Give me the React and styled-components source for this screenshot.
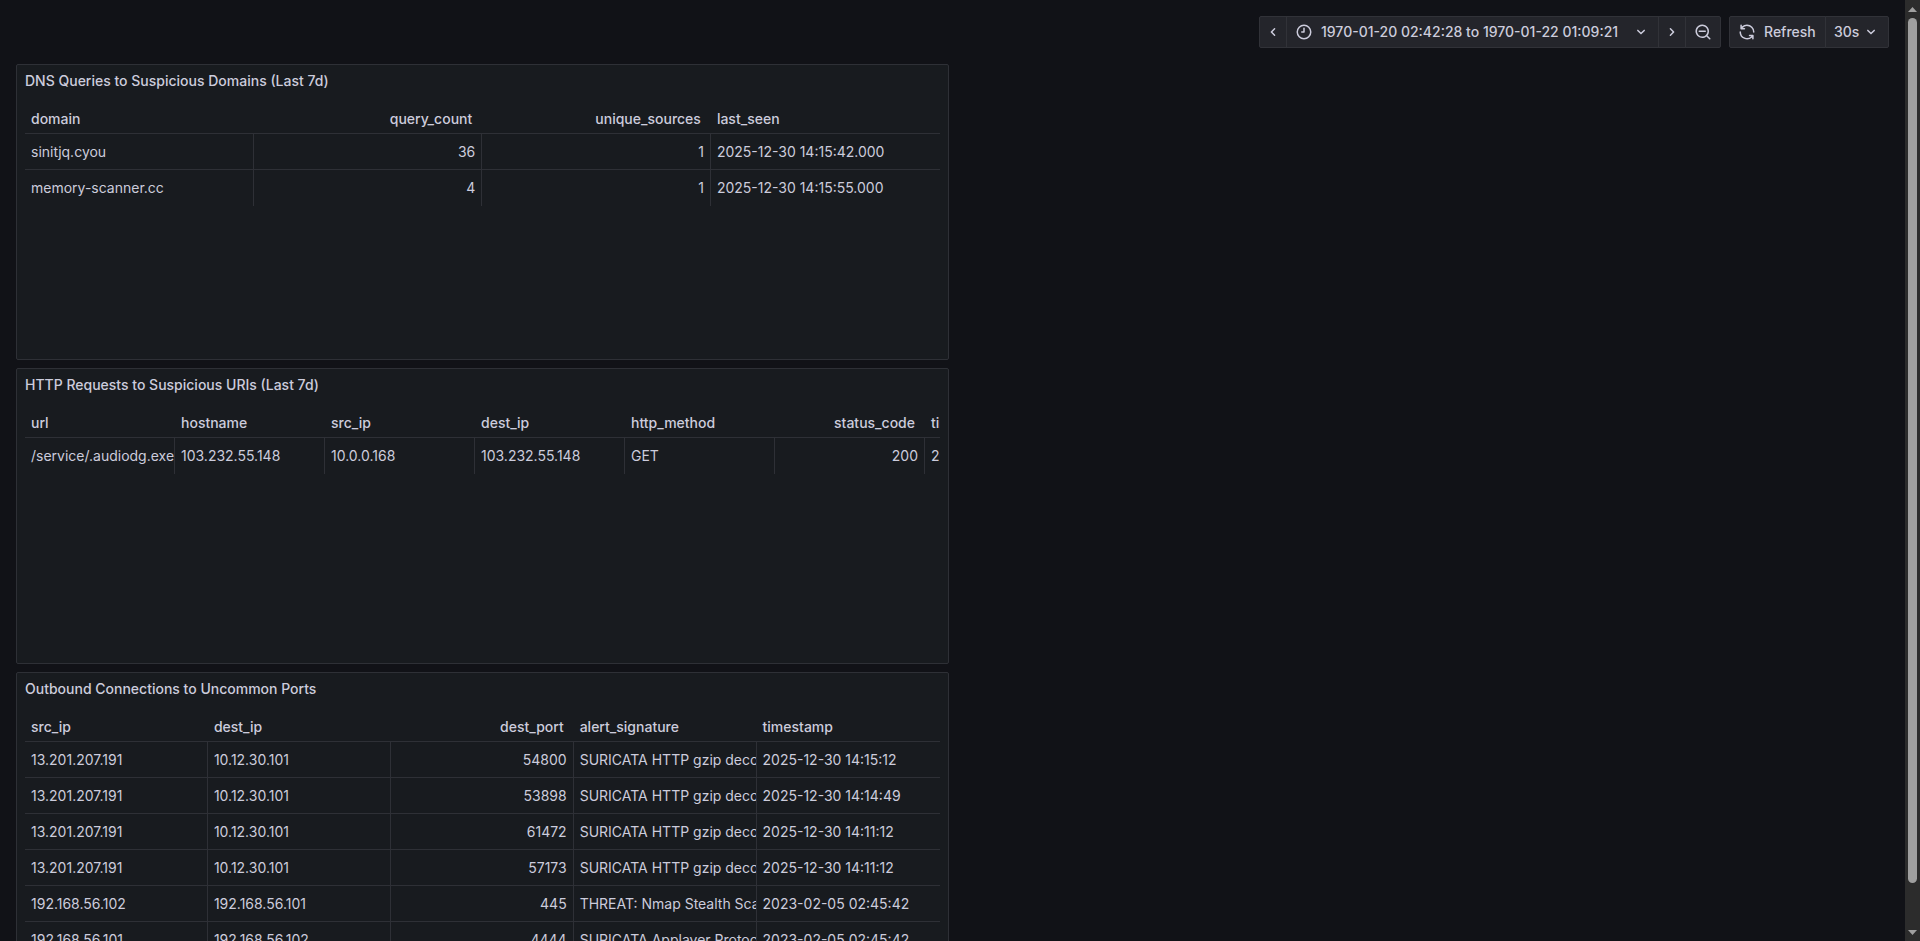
import React, { useCallback, useEffect, useRef, useState } from 'react';
import styled, { createGlobalStyle, ThemeProvider } from 'styled-components';

const theme = {
  canvas: '#111217',
  panel: '#181b1f',
  text: '#ccccdc',
  line: '#2e3036',
  button: '#24252b',
  buttonLine: '#313238',
  track: '#2c2c2c',
  thumb: '#9f9f9f',
};

const GlobalStyle = createGlobalStyle`
  *, *::before, *::after { box-sizing: border-box; }
  body {
    margin: 0;
    background: ${theme.canvas};
    color: ${theme.text};
    font-family: Inter, "Liberation Sans", sans-serif;
    font-size: 14px;
    line-height: 22px;
    -webkit-font-smoothing: antialiased;
  }
`;

const Shell = styled.div`
  display: grid;
  grid-template-columns: minmax(0, 1fr) 15px;
  height: 100vh;
`;

const Viewport = styled.main`
  min-height: 0;
  padding: 16px;
  overflow-y: auto;
  scrollbar-width: none;
`;

const Toolbar = styled.div`
  display: flex;
  justify-content: flex-end;
  gap: 8px;
  margin-bottom: 16px;
`;

const ButtonGroup = styled.div`
  display: flex;
`;

const ToolbarButton = styled.button`
  display: flex;
  align-items: center;
  gap: ${({ $tight }) => ($tight ? 2 : 8)}px;
  min-width: ${({ $minWidth }) => $minWidth || 0}px;
  height: 32px;
  padding: 0 ${({ $narrow }) => ($narrow ? 4 : 8)}px;
  border: 1px solid ${({ theme }) => theme.buttonLine};
  background: ${({ theme }) => theme.button};
  color: inherit;
  font: inherit;
  font-weight: 500;
  white-space: nowrap;
  cursor: pointer;

  & + & { margin-left: -1px; }
  &:first-child { border-radius: 2px 0 0 2px; }
  &:last-child { border-radius: 0 2px 2px 0; }
`;

const ButtonLabel = styled.span`
  flex: 1;
  text-align: left;
`;

const Glyph = styled.svg`
  flex: none;
  width: 18px;
  height: 18px;
  fill: currentColor;
`;

const Dashboard = styled.div`
  display: grid;
  grid-template-columns: repeat(2, minmax(0, 1fr));
  gap: 8px;
`;

const PanelFrame = styled.section`
  grid-column: 1;
  display: flex;
  flex-direction: column;
  min-height: 296px;
  border: 1px solid ${({ theme }) => theme.line};
  border-radius: 2px;
  background: ${({ theme }) => theme.panel};
`;

const PanelTitle = styled.h2`
  margin: 0;
  padding: 0 8px;
  font-size: 14px;
  font-weight: 500;
  line-height: 32px;
`;

const PanelBody = styled.div`
  flex: 1;
  margin: 8px;
  height: 0;
  overflow: auto;
  scrollbar-width: none;
`;

const DataTable = styled.table`
  width: 100%;
  min-width: ${({ $columns }) => $columns * 150}px;
  table-layout: fixed;
  border-collapse: separate;
  border-spacing: 0;
`;

const HeadCell = styled.th`
  height: 29px;
  padding: 0 ${({ $numeric }) => ($numeric ? 10 : 6)}px 0 6px;
  border-bottom: 1px solid ${({ theme }) => theme.line};
  font-weight: 500;
  text-align: ${({ $numeric }) => ($numeric ? 'right' : 'left')};
  white-space: nowrap;
  overflow: hidden;
`;

const Cell = styled.td`
  height: 36px;
  padding: 0 6px;
  border: 0 solid ${({ theme }) => theme.line};
  border-width: 0 1px 1px 0;
  text-align: ${({ $numeric }) => ($numeric ? 'right' : 'left')};
  white-space: nowrap;
  overflow: hidden;

  &:last-child { border-right-width: 0; }
  tr:last-child > & { border-bottom-width: 0; }
`;

const ScrollRail = styled.div`
  display: flex;
  flex-direction: column;
  align-items: center;
  background: ${({ theme }) => theme.track};
`;

const ScrollStep = styled.button`
  display: flex;
  justify-content: center;
  align-items: center;
  width: 15px;
  height: 18px;
  padding: 0;
  border: 0;
  background: none;
  color: ${({ theme }) => theme.thumb};
`;

const StepArrow = styled.svg`
  width: 9px;
  height: 5px;
  fill: currentColor;
`;

const ScrollTrack = styled.div`
  flex: 1;
  width: 9px;
`;

const ScrollThumb = styled.div`
  border-radius: 5px;
  background: ${({ theme }) => theme.thumb};
`;

const iconPaths = {
  left: 'M11.29,12l3.54-3.54a1,1,0,0,0,0-1.41,1,1,0,0,0-1.42,0L9.17,11.29a1,1,0,0,0,0,1.42L13.41,17a1,1,0,0,0,.71.29,1,1,0,0,0,.71-.29,1,1,0,0,0,0-1.41Z',
  right: 'M14.83,11.29,10.59,7.05a1,1,0,0,0-1.42,0,1,1,0,0,0,0,1.41L12.71,12,9.17,15.54a1,1,0,0,0,0,1.41,1,1,0,0,0,.71.29,1,1,0,0,0,.71-.29l4.24-4.24A1,1,0,0,0,14.83,11.29Z',
  down: 'M17,9.17a1,1,0,0,0-1.41,0L12,12.71,8.46,9.17a1,1,0,0,0-1.41,0,1,1,0,0,0,0,1.42l4.24,4.24a1,1,0,0,0,1.42,0L17,10.59A1,1,0,0,0,17,9.17Z',
  clock: 'M12,2A10,10,0,1,0,22,12,10,10,0,0,0,12,2Zm0,18a8,8,0,1,1,8-8A8,8,0,0,1,12,20ZM12,6a1,1,0,0,0-1,1v4H9a1,1,0,0,0,0,2h3a1,1,0,0,0,1-1V7A1,1,0,0,0,12,6Z',
  zoomOut: 'M21.71,20.29,18,16.61A9,9,0,1,0,16.61,18l3.68,3.68a1,1,0,0,0,1.42,0A1,1,0,0,0,21.71,20.29ZM11,18a7,7,0,1,1,7-7A7,7,0,0,1,11,18Zm4-8H7a1,1,0,0,0,0,2h8a1,1,0,0,0,0-2Z',
  sync: 'M19.91,15.51H15.38a1,1,0,0,0,0,2h2.4A8,8,0,0,1,4,12a1,1,0,0,0-2,0,10,10,0,0,0,16.88,7.23V21a1,1,0,0,0,2,0V16.5A1,1,0,0,0,19.91,15.51ZM12,2A10,10,0,0,0,5.12,4.77V3a1,1,0,0,0-2,0V7.5a1,1,0,0,0,1,1h4.5a1,1,0,0,0,0-2H6.22A8,8,0,0,1,20,12a1,1,0,0,0,2,0A10,10,0,0,0,12,2Z',
};

function Icon({ name }) {
  return (
    <Glyph viewBox="0 0 24 24" aria-hidden="true">
      <path d={iconPaths[name]} />
    </Glyph>
  );
}

const gzip = 'SURICATA HTTP gzip decompression failed';

const panels = [
  {
    title: 'DNS Queries to Suspicious Domains (Last 7d)',
    columns: ['domain', 'query_count', 'unique_sources', 'last_seen'],
    numeric: ['query_count', 'unique_sources'],
    rows: [
      ['sinitjq.cyou', '36', '1', '2025-12-30 14:15:42.000'],
      ['memory-scanner.cc', '4', '1', '2025-12-30 14:15:55.000'],
    ],
  },
  {
    title: 'HTTP Requests to Suspicious URIs (Last 7d)',
    columns: ['url', 'hostname', 'src_ip', 'dest_ip', 'http_method', 'status_code', 'timestamp'],
    numeric: ['status_code'],
    rows: [
      ['/service/.audiodg.exe', '103.232.55.148', '10.0.0.168', '103.232.55.148', 'GET', '200', '2025-12-30'],
    ],
  },
  {
    title: 'Outbound Connections to Uncommon Ports',
    columns: ['src_ip', 'dest_ip', 'dest_port', 'alert_signature', 'timestamp'],
    numeric: ['dest_port'],
    rows: [
      ['13.201.207.191', '10.12.30.101', '54800', gzip, '2025-12-30 14:15:12'],
      ['13.201.207.191', '10.12.30.101', '53898', gzip, '2025-12-30 14:14:49'],
      ['13.201.207.191', '10.12.30.101', '61472', gzip, '2025-12-30 14:11:12'],
      ['13.201.207.191', '10.12.30.101', '57173', gzip, '2025-12-30 14:11:12'],
      ['192.168.56.102', '192.168.56.101', '445', 'THREAT: Nmap Stealth Scan', '2023-02-05 02:45:42'],
      ['192.168.56.101', '192.168.56.102', '4444', 'SURICATA Applayer Protocol detection skipped', '2023-02-05 02:45:42'],
    ],
  },
];

function TablePanel({ title, columns, numeric, rows }) {
  return (
    <PanelFrame aria-label={title}>
      <PanelTitle>{title}</PanelTitle>
      <PanelBody>
        <DataTable $columns={columns.length} aria-label={title}>
          <thead>
            <tr>
              {columns.map((name) => (
                <HeadCell key={name} scope="col" $numeric={numeric.includes(name)}>
                  {name}
                </HeadCell>
              ))}
            </tr>
          </thead>
          <tbody>
            {rows.map((row, r) => (
              <tr key={r}>
                {row.map((value, c) => (
                  <Cell key={columns[c]} $numeric={numeric.includes(columns[c])}>
                    {value}
                  </Cell>
                ))}
              </tr>
            ))}
          </tbody>
        </DataTable>
      </PanelBody>
    </PanelFrame>
  );
}

export default function App() {
  const viewport = useRef(null);
  const [scroll, setScroll] = useState({ size: 1, start: 0 });

  const measure = useCallback(() => {
    const { clientHeight, scrollHeight, scrollTop } = viewport.current;
    setScroll({ size: clientHeight / scrollHeight, start: scrollTop / scrollHeight });
  }, []);

  useEffect(() => {
    measure();
    window.addEventListener('resize', measure);
    return () => window.removeEventListener('resize', measure);
  }, [measure]);

  const step = (amount) => () => viewport.current.scrollBy({ top: amount });

  return (
    <ThemeProvider theme={theme}>
      <GlobalStyle />
      <Shell>
        <Viewport ref={viewport} onScroll={measure}>
          <Toolbar>
            <ButtonGroup>
              <ToolbarButton $narrow aria-label="Move time range backwards">
                <Icon name="left" />
              </ToolbarButton>
              <ToolbarButton $minWidth={373}>
                <Icon name="clock" />
                <ButtonLabel>1970-01-20 02:42:28 to 1970-01-22 01:09:21</ButtonLabel>
                <Icon name="down" />
              </ToolbarButton>
              <ToolbarButton $narrow aria-label="Move time range forwards">
                <Icon name="right" />
              </ToolbarButton>
              <ToolbarButton aria-label="Zoom out time range">
                <Icon name="zoomOut" />
              </ToolbarButton>
            </ButtonGroup>
            <ButtonGroup>
              <ToolbarButton $minWidth={97}>
                <Icon name="sync" />
                <ButtonLabel>Refresh</ButtonLabel>
              </ToolbarButton>
              <ToolbarButton $tight $minWidth={64}>
                <ButtonLabel>30s</ButtonLabel>
                <Icon name="down" />
              </ToolbarButton>
            </ButtonGroup>
          </Toolbar>
          <Dashboard>
            {panels.map((panel) => (
              <TablePanel key={panel.title} {...panel} />
            ))}
          </Dashboard>
        </Viewport>
        <ScrollRail>
          <ScrollStep aria-label="Scroll up" onClick={step(-40)}>
            <StepArrow viewBox="0 0 9 5"><path d="M4.5 0L9 5H0z" /></StepArrow>
          </ScrollStep>
          <ScrollTrack>
            <ScrollThumb
              style={{ height: `${scroll.size * 100}%`, transform: `translateY(${(scroll.start / scroll.size) * 100}%)` }}
            />
          </ScrollTrack>
          <ScrollStep aria-label="Scroll down" onClick={step(40)}>
            <StepArrow viewBox="0 0 9 5"><path d="M0 0H9L4.5 5z" /></StepArrow>
          </ScrollStep>
        </ScrollRail>
      </Shell>
    </ThemeProvider>
  );
}
